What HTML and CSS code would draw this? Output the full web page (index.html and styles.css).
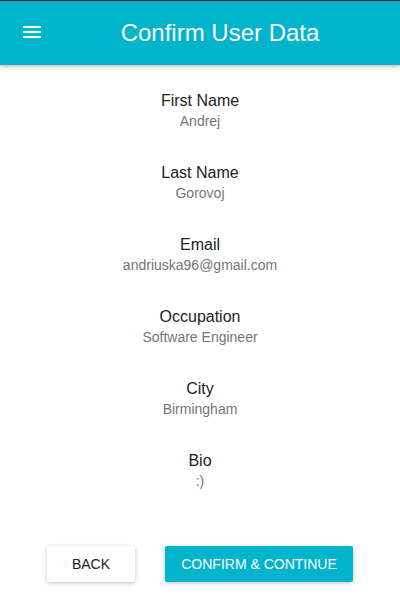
FILE: index.html
```html
<!DOCTYPE html>
<html>
<head>
<meta charset="utf-8">
<link rel="stylesheet" href="styles.css">
</head>
<body>
<header class="toolbar">
  <button class="menu-btn" aria-label="menu">
    <svg width="18" height="12" viewBox="0 0 18 12"><rect x="0" y="0" width="18" height="2" fill="#fff"/><rect x="0" y="5" width="18" height="2" fill="#fff"/><rect x="0" y="10" width="18" height="2" fill="#fff"/></svg>
  </button>
  <h1 class="title">Confirm User Data</h1>
</header>
<main class="content">
  <ul class="fields">
    <li class="field"><div class="label">First Name</div><div class="value">Andrej</div></li>
    <li class="field"><div class="label">Last Name</div><div class="value">Gorovoj</div></li>
    <li class="field"><div class="label">Email</div><div class="value">andriuska96@gmail.com</div></li>
    <li class="field"><div class="label">Occupation</div><div class="value">Software Engineer</div></li>
    <li class="field"><div class="label">City</div><div class="value">Birmingham</div></li>
    <li class="field"><div class="label">Bio</div><div class="value">:)</div></li>
  </ul>
  <div class="actions">
    <button class="btn btn-back">BACK</button>
    <button class="btn btn-primary">CONFIRM &amp; CONTINUE</button>
  </div>
</main>
</body>
</html>
```
FILE: styles.css
```css
* { box-sizing: border-box; }
html, body { margin: 0; padding: 0; background: #fff; }
body { font-family: "Liberation Sans", Arial, sans-serif; width: 400px; height: 610px; overflow: hidden; }
.toolbar {
  height: 65px;
  background: #00b4cc;
  border-top: 1px solid #2a2f33;
  display: flex;
  align-items: center;
  box-shadow: 0 2px 4px rgba(0,0,0,0.25);
  position: relative;
}
.menu-btn {
  width: 40px; height: 40px; margin-left: 12px;
  background: none; border: 0; padding: 0;
  display: flex; align-items: center; justify-content: center;
  margin-top: -2px;
}
.title {
  flex: 1;
  margin: 0 0 0 -12px;
  text-align: center;
  color: #fff;
  font-weight: normal;
  font-size: 24px;
  margin-top: -1px;
}
.content { padding-top: 26px; }
.fields { list-style: none; margin: 0; padding: 0; }
.field { height: 72px; text-align: center; }
.label { font-size: 16px; line-height: 20px; color: #222; }
.value { font-size: 14px; line-height: 18px; color: #757575; margin-top: 1px; }
.actions {
  display: flex; justify-content: center; gap: 30px;
  margin-top: 23px;
}
.btn {
  height: 36px; border: 0; border-radius: 2px;
  font-family: "Liberation Sans", Arial, sans-serif;
  font-size: 14px; padding: 0 16px;
  box-shadow: 0 1px 4px rgba(0,0,0,0.25);
}
.btn-back { width: 88px; background: #fff; color: #222; }
.btn-primary { width: 188px; background: #00b4cc; color: #fff; }
```
